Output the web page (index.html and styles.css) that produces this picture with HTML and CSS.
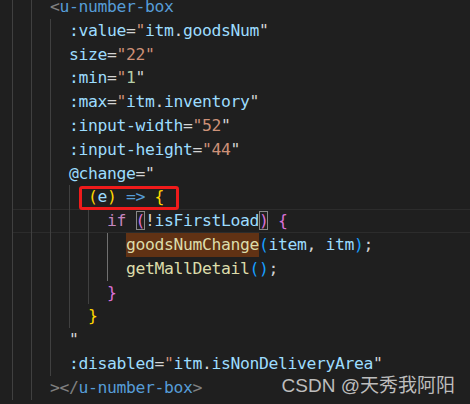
FILE: index.html
```html
<!DOCTYPE html>
<html lang="zh">
<head>
  <meta charset="UTF-8">
  <meta name="viewport" content="width=device-width, initial-scale=1.0">
  <title>u-number-box</title>
  <link rel="stylesheet" href="styles.css">
</head>
<body>
  <div class="editor">
    <div class="ln"><i class="g"></i><i class="g"></i><span class="code"><span class="tb">&lt;</span><span class="tag">u-number-box</span></span></div>
    <div class="ln"><i class="g"></i><i class="g"></i><i class="g"></i><span class="code"><span class="at">:value</span><span class="p">=</span><span class="s">"</span><span class="v">itm</span><span class="p">.</span><span class="v">goodsNum</span><span class="p">"</span></span></div>
    <div class="ln"><i class="g"></i><i class="g"></i><i class="g"></i><span class="code"><span class="at">size</span><span class="p">=</span><span class="s">"22"</span></span></div>
    <div class="ln"><i class="g"></i><i class="g"></i><i class="g"></i><span class="code"><span class="at">:min</span><span class="p">=</span><span class="s">"</span><span class="n">1</span><span class="p">"</span></span></div>
    <div class="ln"><i class="g"></i><i class="g"></i><i class="g"></i><span class="code"><span class="at">:max</span><span class="p">=</span><span class="s">"</span><span class="v">itm</span><span class="p">.</span><span class="v">inventory</span><span class="p">"</span></span></div>
    <div class="ln"><i class="g"></i><i class="g"></i><i class="g"></i><span class="code"><span class="at">:input-width</span><span class="p">=</span><span class="s">"52</span><span class="p">"</span></span></div>
    <div class="ln"><i class="g"></i><i class="g"></i><i class="g"></i><span class="code"><span class="at">:input-height</span><span class="p">=</span><span class="s">"44</span><span class="p">"</span></span></div>
    <div class="ln"><i class="g"></i><i class="g"></i><i class="g"></i><span class="code"><span class="at">@change</span><span class="p">="</span></span></div>
    <div class="ln"><i class="g"></i><i class="g"></i><i class="g"></i><i class="g"></i><span class="code"><span class="mark"><span class="b1">(</span><span class="v">e</span><span class="b1">)</span> <span class="kw">=&gt;</span> <span class="b1">{</span></span></span></div>
    <div class="ln current"><i class="g"></i><i class="g"></i><i class="g"></i><i class="g"></i><i class="g"></i><span class="code"><span class="if">if</span> <span class="b2 match">(</span><span class="p">!</span><span class="v">isFirstLoad</span><span class="b2 match">)</span> <span class="b2">{</span></span></div>
    <div class="ln"><i class="g"></i><i class="g"></i><i class="g"></i><i class="g"></i><i class="g"></i><i class="g on"></i><span class="code"><span class="fn hl">goodsNumChange</span><span class="b3">(</span><span class="v">item</span><span class="p">, </span><span class="v">itm</span><span class="b3">)</span><span class="p">;</span></span></div>
    <div class="ln"><i class="g"></i><i class="g"></i><i class="g"></i><i class="g"></i><i class="g"></i><i class="g on"></i><span class="code"><span class="fn">getMallDetail</span><span class="b3">()</span><span class="p">;</span></span></div>
    <div class="ln"><i class="g"></i><i class="g"></i><i class="g"></i><i class="g"></i><i class="g"></i><span class="code"><span class="b2">}</span></span></div>
    <div class="ln"><i class="g"></i><i class="g"></i><i class="g"></i><i class="g"></i><span class="code"><span class="b1">}</span></span></div>
    <div class="ln"><i class="g"></i><i class="g"></i><i class="g"></i><span class="code"><span class="p">"</span></span></div>
    <div class="ln"><i class="g"></i><i class="g"></i><i class="g"></i><span class="code"><span class="at">:disabled</span><span class="p">=</span><span class="s">"</span><span class="v">itm</span><span class="p">.</span><span class="v">isNonDeliveryArea</span><span class="p">"</span></span></div>
    <div class="ln"><i class="g"></i><i class="g"></i><span class="code"><span class="tb">&gt;&lt;/</span><span class="tag">u-number-box</span><span class="tb">&gt;</span></span></div>
  </div>
  <div class="watermark">CSDN @天秀我阿阳</div>
</body>
</html>
```

FILE: styles.css
```css
html, body {
  margin: 0;
  height: 100%;
  background: #1f1f1f;
  overflow: hidden;
}
body {
  position: relative;
}
.editor {
  margin-top: -5px;
  padding-left: 12px;
  font-family: "DejaVu Sans Mono", "Liberation Mono", monospace;
  font-size: 16.4px;
  letter-spacing: -0.37px;
  color: #d4d4d4;
}
.ln {
  display: flex;
  height: 23.8px;
  align-items: stretch;
  box-sizing: border-box;
}
.ln.current {
  box-shadow: inset 0 1px 0 #2c2c2c, inset 0 -1px 0 #2c2c2c;
}
.g {
  flex: none;
  width: 19px;
  border-left: 1px solid #404040;
  box-sizing: border-box;
}
.g.on {
  border-left-color: #707070;
}
.code {
  white-space: pre;
  line-height: 23.8px;
}
.tb { color: #808080; }
.tag { color: #569cd6; }
.at { color: #9cdcfe; }
.p { color: #d4d4d4; }
.s { color: #ce9178; }
.n { color: #b5cea8; }
.v { color: #9cdcfe; }
.kw { color: #569cd6; }
.if { color: #c586c0; }
.fn { color: #dcdcaa; }
.b1 { color: #ffd700; }
.b2 { color: #da70d6; }
.b3 { color: #179fff; }
.match {
  outline: 1px solid #888888;
  outline-offset: -1px;
}
.hl {
  background: #613214;
  display: inline-block;
  height: 100%;
}
.mark {
  position: relative;
}
.mark::after {
  content: "";
  position: absolute;
  left: -9px;
  right: -15px;
  top: -1px;
  bottom: -4px;
  border: 3px solid #f01b1b;
  border-radius: 3px;
}
.watermark {
  position: absolute;
  right: 15px;
  bottom: 7px;
  font-family: "Liberation Sans", "Noto Sans CJK SC", sans-serif;
  font-size: 19px;
  color: #bdbdbd;
}
```
